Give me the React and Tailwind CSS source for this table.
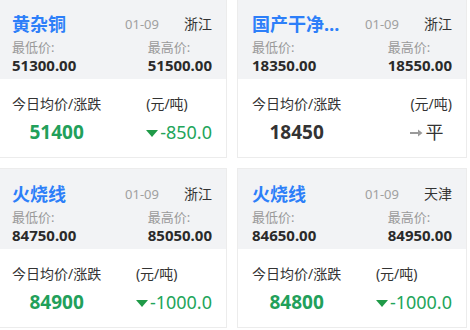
const items = [
  { name: '黄杂铜', date: '01-09', area: '浙江', low: '51300.00', high: '51500.00', avg: '51400', change: -850.0 },
  { name: '国产干净铜', date: '01-09', area: '浙江', low: '18350.00', high: '18550.00', avg: '18450', change: 0 },
  { name: '火烧线', date: '01-09', area: '浙江', low: '84750.00', high: '85050.00', avg: '84900', change: -1000.0 },
  { name: '火烧线', date: '01-09', area: '天津', low: '84650.00', high: '84950.00', avg: '84800', change: -1000.0 },
];

function Change({ value }) {
  if (value === 0) {
    return (
      <div className="flex items-center text-[18px] leading-[25px] text-[#333]">
        <svg width="13" height="8" viewBox="0 0 13 8" className="mr-[2px]">
          <path d="M0 4h9" stroke="#9a9a9a" strokeWidth="2" />
          <path d="M8 0.5l4.5 3.5-4.5 3.5z" fill="#9a9a9a" />
        </svg>
        平
      </div>
    );
  }
  const up = value > 0;
  return (
    <div className={`flex items-center text-[18px] leading-[25px] ${up ? 'text-[#e23c3c]' : 'text-[#22a55a]'}`}>
      <svg width="12" height="7" viewBox="0 0 12 7" className="mr-[2px] mt-[2px]">
        {up ? <path d="M0 7L6 0l6 7z" fill="#d83030" /> : <path d="M0 0h12L6 7z" fill="#1f9a48" />}
      </svg>
      {up ? '+' : ''}
      {value.toFixed(1)}
    </div>
  );
}

function PriceCard({ item }) {
  return (
    <div className="h-[160px] border border-[#ececec] bg-white">
      <div className="h-[80px] bg-[#f2f3f5] px-[14px] pt-[11px]">
        <div className="flex items-center leading-[28px]">
          <div className="w-[88px] truncate text-[18px] font-bold text-[#2d7ff9]">{item.name}</div>
          <div className="ml-auto text-[13px] text-[#a0a0a0]">{item.date}</div>
          <div className="ml-[25px] text-[14px] text-[#333]">{item.area}</div>
        </div>
        <div className="flex justify-between">
          <div>
            <div className="text-[13px] leading-[18px] text-[#9a9a9a]">最低价:</div>
            <div className="text-[15px] font-bold leading-[18px] text-[#2a2a2a]">{item.low}</div>
          </div>
          <div>
            <div className="text-[13px] leading-[18px] text-[#9a9a9a]">最高价:</div>
            <div className="text-[15px] font-bold leading-[18px] text-[#2a2a2a]">{item.high}</div>
          </div>
        </div>
      </div>
      <div className="flex justify-between px-[14px] pt-[14px]">
        <div className="flex flex-col items-center">
          <div className="text-[14px] leading-[21px] text-[#333]">今日均价/涨跌</div>
          <div
            className={`mt-[6px] text-[19px] font-bold leading-[25px] ${
              item.change === 0 ? 'text-[#333]' : 'text-[#22a05a]'
            }`}
          >
            {item.avg}
          </div>
        </div>
        <div className="flex flex-col items-start">
          <div className="text-[14px] leading-[21px] text-[#333]">(元/吨)</div>
          <div className="mt-[6px]">
            <Change value={item.change} />
          </div>
        </div>
      </div>
    </div>
  );
}

export default function App() {
  return (
    <div className="h-[330px] w-[470px] overflow-hidden bg-white font-['Noto_Sans','Noto_Sans_CJK_SC',sans-serif]">
      <div className="-ml-[3px] -mt-[2px] grid w-[470px] grid-cols-2 gap-x-[10px] gap-y-[10px]">
        {items.map((item, i) => (
          <PriceCard key={i} item={item} />
        ))}
      </div>
    </div>
  );
}
